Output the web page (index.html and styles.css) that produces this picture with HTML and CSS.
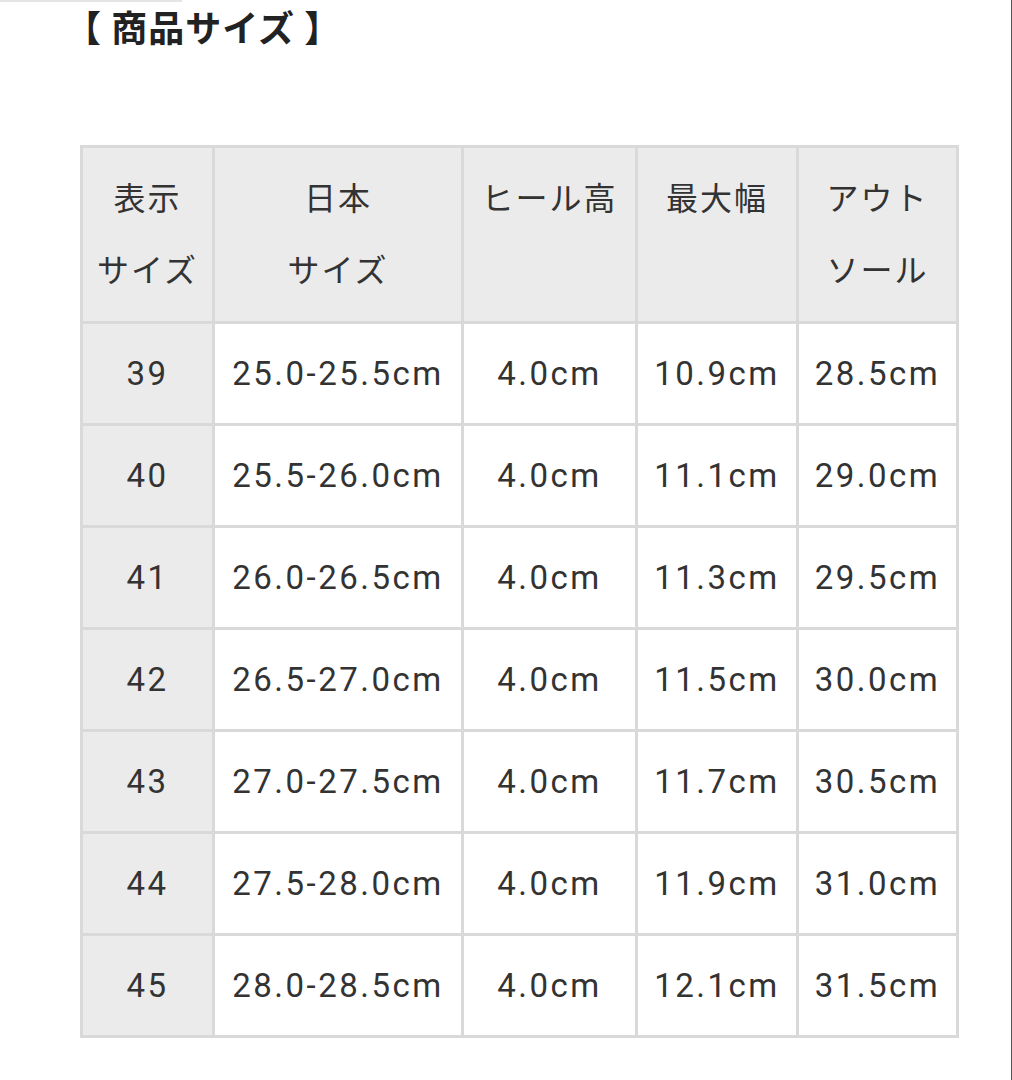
FILE: index.html
```html
<!DOCTYPE html>
<html lang="ja">
<head>
<meta charset="utf-8">
<title>商品サイズ</title>
<link rel="stylesheet" href="styles.css">
</head>
<body>
<div class="page">
  <div class="topline"></div>
  <h2 class="title">【 商品サイズ 】</h2>
  <table class="size-table">
    <colgroup>
      <col class="c1"><col class="c2"><col class="c3"><col class="c4"><col class="c5">
    </colgroup>
    <thead>
      <tr>
        <th>表示<br>サイズ</th>
        <th>日本<br>サイズ</th>
        <th>ヒール高</th>
        <th>最大幅</th>
        <th>アウト<br>ソール</th>
      </tr>
    </thead>
    <tbody>
      <tr><th>39</th><td>25.0-25.5cm</td><td>4.0cm</td><td>10.9cm</td><td>28.5cm</td></tr>
      <tr><th>40</th><td>25.5-26.0cm</td><td>4.0cm</td><td>11.1cm</td><td>29.0cm</td></tr>
      <tr><th>41</th><td>26.0-26.5cm</td><td>4.0cm</td><td>11.3cm</td><td>29.5cm</td></tr>
      <tr><th>42</th><td>26.5-27.0cm</td><td>4.0cm</td><td>11.5cm</td><td>30.0cm</td></tr>
      <tr><th>43</th><td>27.0-27.5cm</td><td>4.0cm</td><td>11.7cm</td><td>30.5cm</td></tr>
      <tr><th>44</th><td>27.5-28.0cm</td><td>4.0cm</td><td>11.9cm</td><td>31.0cm</td></tr>
      <tr><th>45</th><td>28.0-28.5cm</td><td>4.0cm</td><td>12.1cm</td><td>31.5cm</td></tr>
    </tbody>
  </table>
</div>
</body>
</html>
```

FILE: styles.css
```css
html, body {
  margin: 0;
  padding: 0;
  background: #ffffff;
}

.page {
  width: 1012px;
  height: 1080px;
  box-sizing: border-box;
  border-right: 1px solid #555555;
  overflow: hidden;
  font-family: Roboto, "Noto Sans CJK JP", sans-serif;
  color: #333333;
}

.topline {
  width: 182px;
  height: 2px;
  background: #e4e4e4;
}

.title {
  margin: 2px 0 0 65px;
  font-family: "Noto Sans CJK JP", sans-serif;
  font-size: 36px;
  font-weight: 700;
  line-height: 44px;
  letter-spacing: 1px;
  color: #222222;
}

.size-table {
  margin: 97px 0 0 80px;
  border-collapse: separate;
  border-spacing: 3px;
  background: #d9d9d9;
  table-layout: fixed;
  width: 879px;
}

.size-table .c1 { width: 129px; }
.size-table .c2 { width: 246px; }
.size-table .c3 { width: 171px; }
.size-table .c4 { width: 158px; }
.size-table .c5 { width: 157px; }

.size-table th,
.size-table td {
  padding: 0;
  text-align: center;
  font-weight: 400;
  font-size: 33px;
  letter-spacing: 2.5px;
  color: #333333;
  background: #ffffff;
}

.size-table thead th {
  height: 173px;
  box-sizing: border-box;
  vertical-align: top;
  padding-top: 12px;
  line-height: 72px;
  font-size: 32px;
  letter-spacing: 2px;
  background: #ebebeb;
  font-family: "Noto Sans CJK JP", sans-serif;
}

.size-table tbody th,
.size-table tbody td {
  height: 99px;
  vertical-align: middle;
  line-height: 38px;
}

.size-table tbody th {
  background: #ebebeb;
}
```
